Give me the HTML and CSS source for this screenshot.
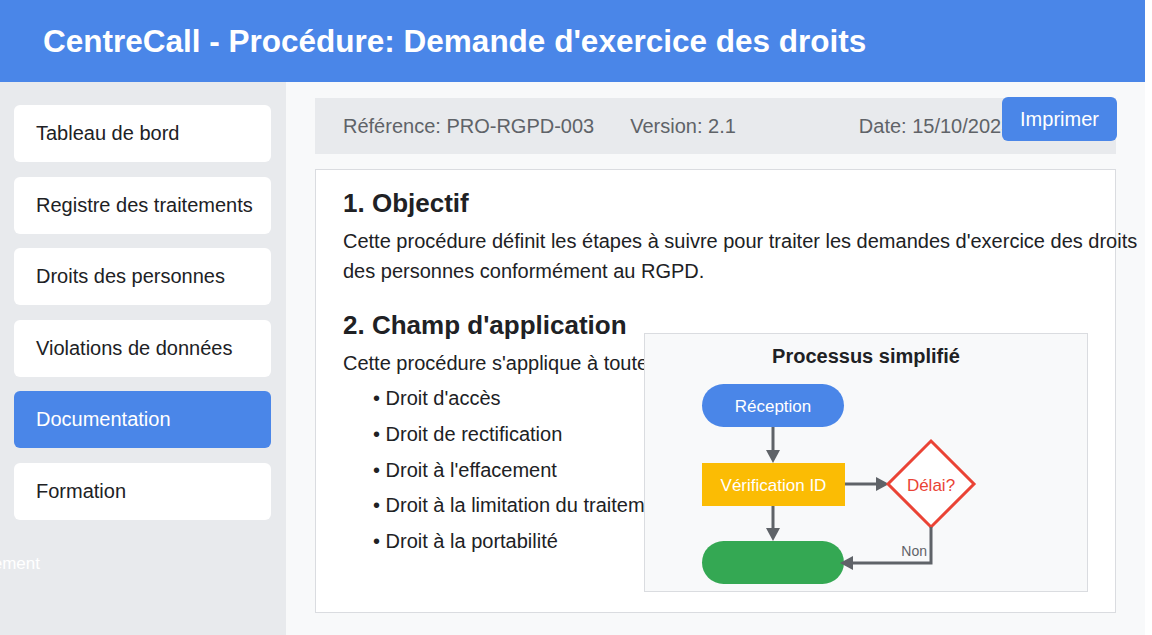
FILE: index.html
```html
<!DOCTYPE html>
<html lang="fr">
<head>
<meta charset="utf-8">
<title>CentreCall - Procédure</title>
<link rel="stylesheet" href="styles.css">
</head>
<body>
<div class="app">
  <header class="topbar">
    <h1 class="title">CentreCall - Procédure: Demande d'exercice des droits</h1>
  </header>
  <nav class="sidebar">
    <div class="nav-item">Tableau de bord</div>
    <div class="nav-item">Registre des traitements</div>
    <div class="nav-item">Droits des personnes</div>
    <div class="nav-item">Violations de données</div>
    <div class="nav-item active">Documentation</div>
    <div class="nav-item">Formation</div>
    <div class="sidebar-note"><span>Conformité RGPD – Règlement</span></div>
  </nav>
  <main class="main">
    <div class="info-bar">
      <span>Référence: PRO-RGPD-003</span>
      <span>Version: 2.1</span>
      <span class="info-date">Date: 15/10/2023</span>
    </div>
    <button class="print-btn">Imprimer</button>
    <section class="card">
      <h2 class="card-title">1. Objectif</h2>
      <p class="card-text wide">Cette procédure définit les étapes à suivre pour traiter les demandes d'exercice des droits des personnes conformément au RGPD.</p>
      <h2 class="card-title second">2. Champ d'application</h2>
      <p class="card-text">Cette procédure s'applique à toutes les demandes concernant :</p>
      <ul class="rights">
        <li>Droit d'accès</li>
        <li>Droit de rectification</li>
        <li>Droit à l'effacement</li>
        <li>Droit à la limitation du traitement</li>
        <li>Droit à la portabilité</li>
      </ul>
      <div class="diagram">
        <svg class="diagram-svg" width="442" height="257" viewBox="0 0 442 257">
          <text class="d-title" x="221" y="29" text-anchor="middle">Processus simplifié</text>
          <rect x="57" y="50" width="142" height="43" rx="21.5" fill="#4a86e8"/>
          <text class="d-label" x="128" y="72" text-anchor="middle" dominant-baseline="central" fill="#ffffff">Réception</text>
          <line x1="128" y1="93" x2="128" y2="117" stroke="#5f6368" stroke-width="3"/>
          <polygon points="121,116 135,116 128,129" fill="#5f6368"/>
          <rect x="57" y="129" width="143" height="43" fill="#fbbc04"/>
          <text class="d-label" x="128.5" y="151" text-anchor="middle" dominant-baseline="central" fill="#ffffff">Vérification ID</text>
          <line x1="200" y1="150" x2="232" y2="150" stroke="#5f6368" stroke-width="3"/>
          <polygon points="231,143 231,157 244,150" fill="#5f6368"/>
          <polygon points="286,107 329,150 286,193 243,150" fill="#ffffff" stroke="#ea4335" stroke-width="3"/>
          <text class="d-label" x="286" y="151" text-anchor="middle" dominant-baseline="central" fill="#ea4335">Délai?</text>
          <line x1="128" y1="172" x2="128" y2="195" stroke="#5f6368" stroke-width="3"/>
          <polygon points="121,194 135,194 128,207" fill="#5f6368"/>
          <rect x="57" y="207" width="142" height="43" rx="21.5" fill="#34a853"/>
          <polyline points="286,193 286,229 207,229" fill="none" stroke="#5f6368" stroke-width="3"/>
          <polygon points="208,222 208,236 195,229" fill="#5f6368"/>
          <text class="d-small" x="282" y="222" text-anchor="end">Non</text>
        </svg>
      </div>
    </section>
  </main>
</div>
</body>
</html>
```

FILE: styles.css
```css
html {
  background: #ffffff;
}

body {
  margin: 0;
  font-family: "Liberation Sans", Arial, sans-serif;
  color: #202124;
}

.app {
  width: 1145px;
  height: 635px;
  display: grid;
  grid-template-columns: 286px minmax(0, 1fr);
  grid-template-rows: 82px 1fr;
  overflow: hidden;
}

.topbar {
  grid-column: 1 / 3;
  background: #4a86e8;
  display: flex;
  align-items: center;
  padding-left: 43px;
}

.title {
  margin: 0;
  color: #ffffff;
  font-size: 31.5px;
  font-weight: bold;
  line-height: 36px;
}

.sidebar {
  background: #e8eaed;
  padding: 23px 15px 0 14px;
  display: flex;
  flex-direction: column;
  gap: 14.6px;
  min-width: 0;
}

.nav-item {
  background: #ffffff;
  border-radius: 6px;
  padding: 17px 12px 17px 22px;
  font-size: 20px;
  line-height: 23px;
  color: #202124;
  white-space: nowrap;
}

.nav-item.active {
  background: #4a86e8;
  color: #ffffff;
}

.sidebar-note {
  margin-top: 20px;
  margin-left: -314px;
  width: 340px;
  display: flex;
  justify-content: flex-end;
  white-space: nowrap;
  color: #ffffff;
  font-size: 17px;
  line-height: 18px;
}

.main {
  position: relative;
  min-width: 0;
  background: #f8f9fa;
  padding: 16px 29px 0;
}

.info-bar {
  background: #e8eaed;
  height: 56px;
  padding: 0 28px;
  display: flex;
  align-items: center;
  gap: 36px;
  font-size: 20px;
  color: #5f6368;
  white-space: nowrap;
  overflow: hidden;
}

.info-date {
  margin-left: 87px;
}

.print-btn {
  position: absolute;
  top: 15px;
  right: 28px;
  width: 115px;
  height: 44px;
  border: none;
  border-radius: 6px;
  background: #4a86e8;
  color: #ffffff;
  font-family: "Liberation Sans", Arial, sans-serif;
  font-size: 20px;
  padding: 0;
}

.card {
  position: relative;
  margin-top: 15px;
  background: #ffffff;
  border: 1px solid #dadce0;
  padding: 18px 27px 52px;
}

.card-title {
  margin: 0 0 8px;
  font-size: 26px;
  line-height: 30px;
  font-weight: bold;
  color: #202124;
}

.card-title.second {
  margin-top: 24px;
}

.card-text {
  margin: 0;
  font-size: 20px;
  line-height: 30px;
  color: #202124;
}

.card-text.wide {
  width: 810px;
}

.rights {
  list-style: none;
  margin: 3px 0 0;
  padding: 0 0 0 30px;
  font-size: 20px;
  line-height: 35.75px;
  color: #202124;
}

.rights li::before {
  content: "• ";
}

.diagram {
  position: absolute;
  left: 328px;
  top: 163px;
  width: 442px;
  height: 257px;
  border: 1px solid #dadce0;
  background: #f8f9fa;
}

.diagram-svg {
  display: block;
  font-family: "Liberation Sans", Arial, sans-serif;
}

.d-title {
  font-size: 20px;
  font-weight: bold;
  fill: #202124;
}

.d-label {
  font-size: 17px;
}

.d-small {
  font-size: 14px;
  fill: #5f6368;
}
```
